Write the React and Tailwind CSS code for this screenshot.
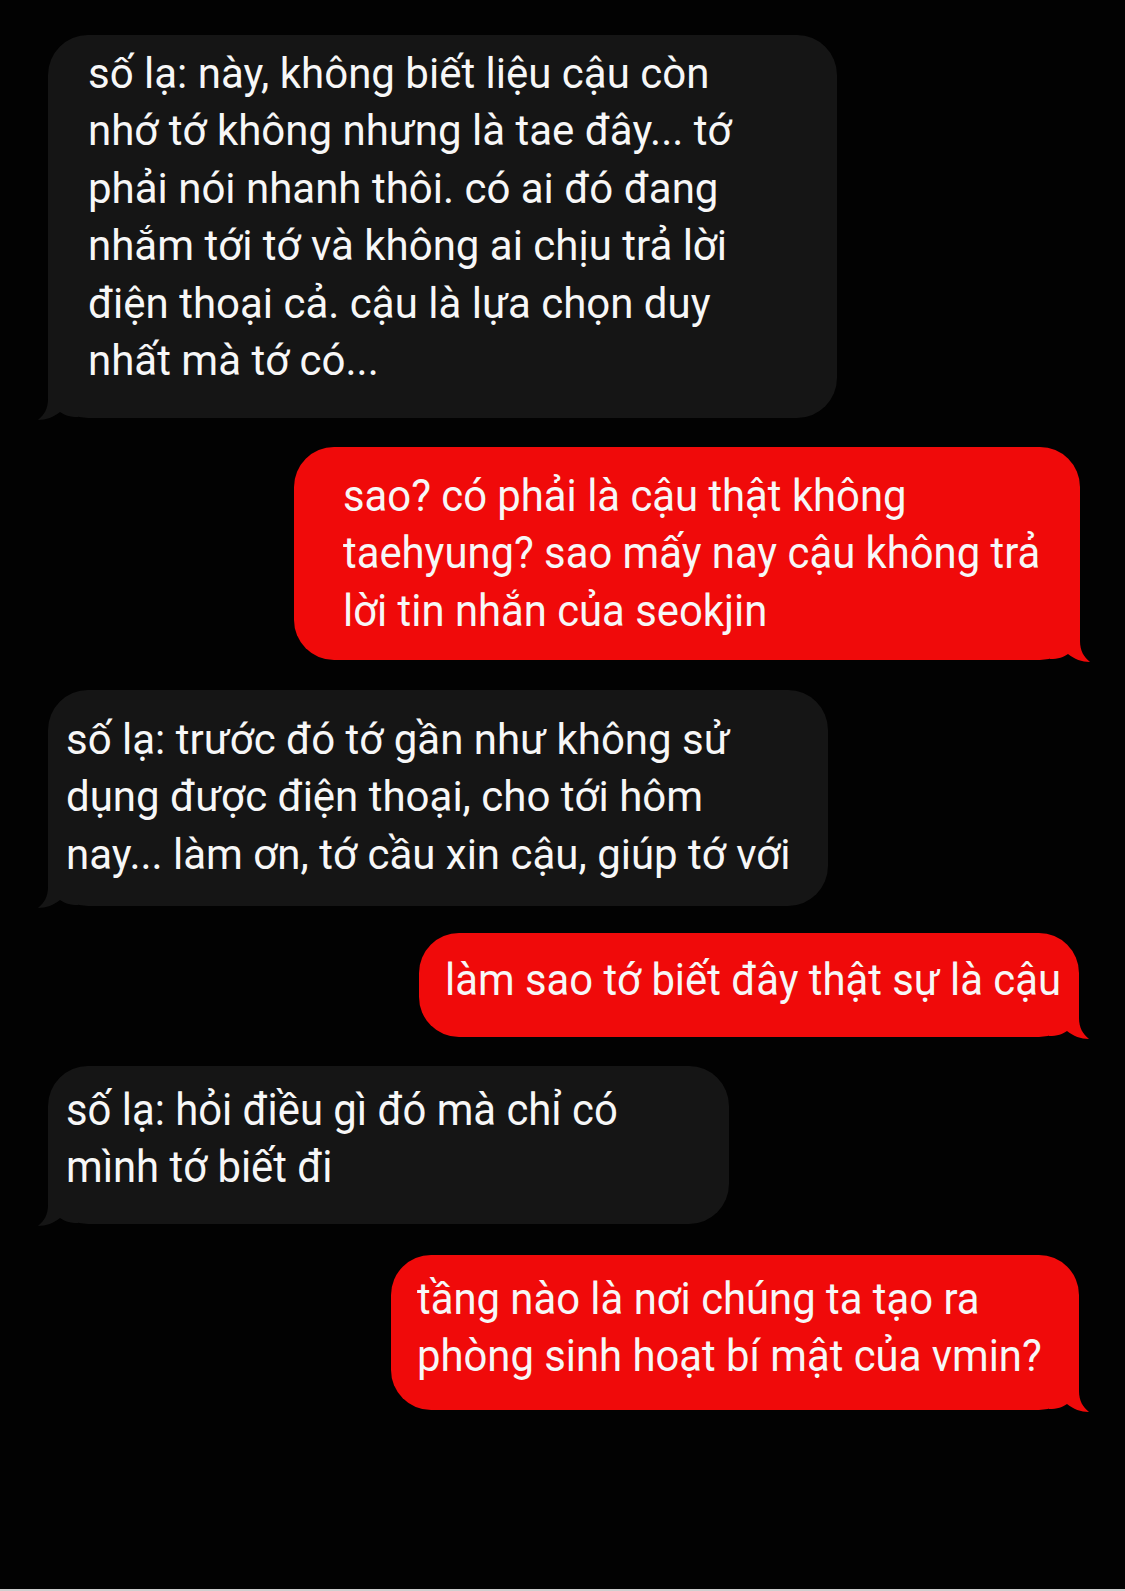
const font = { fontFamily: 'Roboto, "Noto Sans", sans-serif' };

function TailLeft({ color }) {
  return (
    <svg className="absolute bottom-[-3px] left-[-10px] h-[44px] w-[48px]" viewBox="0 0 48 44" fill="none">
      <path d="M10 0 L10 22 C10 32 6 38 0 43 C8 43 16 40 22 35 C26 38 32 40 40 40 L40 0 Z" fill={color} />
    </svg>
  );
}

function TailRight({ color }) {
  return (
    <svg className="absolute bottom-[-3px] right-[-10px] h-[44px] w-[48px]" viewBox="0 0 48 44" fill="none">
      <path d="M38 0 L38 22 C38 32 42 38 48 43 C40 43 32 40 26 35 C22 38 16 40 8 40 L8 0 Z" fill={color} />
    </svg>
  );
}

function Bubble({ side, lines, className, textClass = 'text-[42px]' }) {
  const gray = side === 'left';
  const color = gray ? '#151515' : '#f00a0a';
  return (
    <div
      className={`relative rounded-[40px] ${gray ? 'bg-[#151515]' : 'bg-[#f00a0a]'} ${className}`}
      style={font}
    >
      {gray ? <TailLeft color={color} /> : <TailRight color={color} />}
      <div className={`relative leading-[57.4px] text-[#f7f7f7] ${textClass}`}>
        {lines.map((l, i) => (
          <div key={i} className="whitespace-nowrap">
            {l}
          </div>
        ))}
      </div>
    </div>
  );
}

const tall = 'origin-left scale-x-[0.95] text-[44px]';

export default function App() {
  return (
    <div className="relative flex min-h-[1591px] w-[1125px] flex-col bg-[#020202]">
      <Bubble
        side="left"
        className="ml-[48px] mt-[35px] h-[383px] w-[789px] pl-[40px] pt-[10px]"
        lines={[
          'số lạ: này, không biết liệu cậu còn',
          'nhớ tớ không nhưng là tae đây... tớ',
          'phải nói nhanh thôi. có ai đó đang',
          'nhắm tới tớ và không ai chịu trả lời',
          'điện thoại cả. cậu là lựa chọn duy',
          'nhất mà tớ có...',
        ]}
      />
      <Bubble
        side="right"
        className="ml-[294px] mt-[29px] h-[213px] w-[786px] pl-[49px] pt-[21px]"
        textClass={tall}
        lines={[
          'sao? có phải là cậu thật không',
          'taehyung? sao mấy nay cậu không trả',
          'lời tin nhắn của seokjin',
        ]}
      />
      <Bubble
        side="left"
        className="ml-[48px] mt-[30px] h-[216px] w-[780px] pl-[18px] pt-[21px]"
        lines={[
          'số lạ: trước đó tớ gần như không sử',
          'dụng được điện thoại, cho tới hôm',
          'nay... làm ơn, tớ cầu xin cậu, giúp tớ với',
        ]}
      />
      <Bubble
        side="right"
        className="ml-[419px] mt-[27px] h-[104px] w-[660px] pl-[26px] pt-[19px]"
        textClass={tall}
        lines={['làm sao tớ biết đây thật sự là cậu']}
      />
      <Bubble
        side="left"
        className="ml-[48px] mt-[29px] h-[158px] w-[681px] pl-[18px] pt-[16px]"
        textClass={tall}
        lines={['số lạ: hỏi điều gì đó mà chỉ có', 'mình tớ biết đi']}
      />
      <Bubble
        side="right"
        className="ml-[391px] mt-[31px] h-[155px] w-[688px] pl-[26px] pt-[16px]"
        textClass={tall}
        lines={['tầng nào là nơi chúng ta tạo ra', 'phòng sinh hoạt bí mật của vmin?']}
      />
      <div className="absolute bottom-0 left-0 h-[2px] w-full bg-[#cfcfcf]" />
    </div>
  );
}
